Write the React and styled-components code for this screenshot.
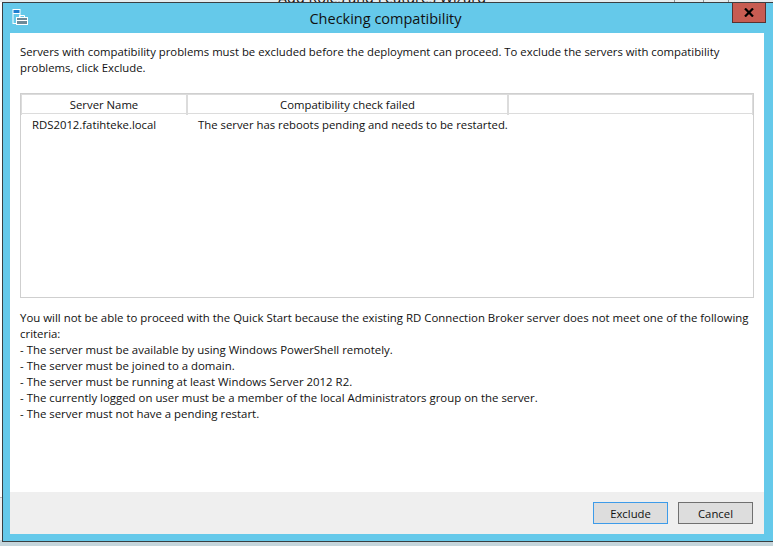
import React from 'react';
import styled, { createGlobalStyle } from 'styled-components';

const GlobalStyle = createGlobalStyle`
  * {
    box-sizing: border-box;
  }
  html, body {
    margin: 0;
    padding: 0;
    background: #c6d6dc;
    font-family: "Open Sans", "Noto Sans", sans-serif;
    font-size: 11.33px;
    color: #111;
  }
`;

const Page = styled.div`
  width: 773px;
  height: 546px;
  overflow: hidden;
  display: flex;
  flex-direction: column;
  background: linear-gradient(#fff 497px, #b9b9b9 497px, #b9b9b9 498px, #efefef 498px, #efefef 540px, #c6d6dc 540px);
`;

const BehindBar = styled.div`
  height: 2px;
  flex: none;
  overflow: hidden;
  display: flex;
  justify-content: center;
  align-items: flex-end;
  background-color: #e6ecee;
  background-image: linear-gradient(#8a9499, #8a9499), linear-gradient(#8a9499, #8a9499), linear-gradient(#8a9499, #8a9499);
  background-size: 1px 2px;
  background-repeat: no-repeat;
  background-position: 674px 0, 703px 0, 728px 0;
`;

const BehindTitle = styled.span`
  font-size: 14.4px;
  line-height: 10px;
  margin-bottom: -1px;
  margin-left: -9px;
  white-space: nowrap;
`;

const Window = styled.div`
  margin-left: 2px;
  height: 540px;
  flex: none;
  background: #65c9ea;
  border-top: 1px solid #3a3f42;
  border-left: 1px solid #3a3f42;
  border-bottom: 1px solid #3a3f42;
  display: flex;
  flex-direction: column;
`;

const TitleBar = styled.div`
  height: 30px;
  flex: none;
  display: flex;
  align-items: center;
  justify-content: center;
  position: relative;
`;

const TitleIcon = styled.svg`
  position: absolute;
  left: 9px;
  top: 6px;
`;

const Title = styled.h1`
  margin: 0 0 0 -5px;
  font-size: 14.5px;
  font-weight: 400;
  color: #111;
`;

const CloseButton = styled.button`
  position: absolute;
  right: 7px;
  top: 0;
  width: 34px;
  height: 20px;
  padding: 0;
  border: 1px solid #5a3230;
  border-top: 0;
  background: #c75c52;
  display: flex;
  align-items: center;
  justify-content: center;
`;

const Body = styled.div`
  margin: 0 9px 7px 7px;
  flex: 1;
  background: #fff;
  display: flex;
  flex-direction: column;
`;

const Content = styled.div`
  flex: 1;
  padding: 11px 10px 0;
  display: flex;
  flex-direction: column;
`;

const Intro = styled.p`
  margin: 0;
  line-height: 16px;
  height: 49px;
`;

const Table = styled.div`
  height: 205px;
  flex: none;
  border: 1px solid #cfcfcf;
  display: flex;
  flex-direction: column;
`;

const Row = styled.div`
  display: grid;
  grid-template-columns: 167px 321px 1fr;
`;

const HeaderRow = styled(Row)`
  height: 20px;
  border-bottom: 1px solid #dcdcdc;
`;

const HeaderCell = styled.div`
  text-align: center;
  line-height: 20px;
  border-right: 2px solid #dcdcdc;
  border-left: ${({ $first }) => ($first ? '1px solid #dcdcdc' : '0')};
  border-top: 1px solid #dcdcdc;
  &:last-child {
    border-right: 1px solid #dcdcdc;
  }
`;

const Cell = styled.div`
  padding-left: ${({ $first }) => ($first ? '11px' : '10px')};
  line-height: 22px;
  white-space: nowrap;
`;

const Notes = styled.div`
  margin-top: 12px;
  font-size: 11.42px;
  line-height: 16px;
`;

const Footer = styled.div`
  height: 42px;
  flex: none;
  background: #efefef;
  display: flex;
  justify-content: flex-end;
  align-items: flex-start;
  gap: 10px;
  padding: 10px 11px 0 0;
`;

const Button = styled.button`
  width: 75px;
  height: 22px;
  padding: 0;
  font: inherit;
  color: #111;
  background: #dddddd;
  border: 1px solid ${({ $focused }) => ($focused ? '#3d9be9' : '#707070')};
`;

const notes = [
  'You will not be able to proceed with the Quick Start because the existing RD Connection Broker server does not meet one of the following criteria:',
  '- The server must be available by using Windows PowerShell remotely.',
  '- The server must be joined to a domain.',
  '- The server must be running at least Windows Server 2012 R2.',
  '- The currently logged on user must be a member of the local Administrators group on the server.',
  '- The server must not have a pending restart.',
];

export default function App() {
  return (
    <Page>
      <GlobalStyle />
      <BehindBar>
        <BehindTitle>Add Roles and Features Wizard</BehindTitle>
      </BehindBar>
      <Window>
        <TitleBar>
          <TitleIcon width="17" height="16" viewBox="0 0 17 16">
            <rect x="0.5" y="0" width="8" height="15" fill="#fff" />
            <rect x="1.5" y="1" width="6" height="3" fill="#1f7fd0" />
            <rect x="1.5" y="5" width="6" height="9" fill="#65c9ea" />
            <rect x="4" y="8" width="12" height="8" fill="#fff" />
            <rect x="5" y="9" width="10" height="2" fill="#6d8a99" />
            <rect x="5" y="12" width="10" height="3" fill="#6d8a99" />
            <path d="M7.5 8V6.5h5V8" fill="none" stroke="#fff" strokeWidth="1" />
          </TitleIcon>
          <Title>Checking compatibility</Title>
          <CloseButton aria-label="Close">
            <svg width="10" height="9" viewBox="0 0 10 9">
              <path d="M1 0.5 L9 8.5 M9 0.5 L1 8.5" stroke="#000" strokeWidth="2.2" />
            </svg>
          </CloseButton>
        </TitleBar>
        <Body>
          <Content>
            <Intro>
              Servers with compatibility problems must be excluded before the deployment can proceed. To exclude the servers with compatibility problems, click Exclude.
            </Intro>
            <Table>
              <HeaderRow>
                <HeaderCell $first>Server Name</HeaderCell>
                <HeaderCell>Compatibility check failed</HeaderCell>
                <HeaderCell />
              </HeaderRow>
              <Row>
                <Cell $first>RDS2012.fatihteke.local</Cell>
                <Cell>The server has reboots pending and needs to be restarted.</Cell>
              </Row>
            </Table>
            <Notes>
              {notes.map((line) => (
                <div key={line}>{line}</div>
              ))}
            </Notes>
          </Content>
          <Footer>
            <Button $focused>Exclude</Button>
            <Button>Cancel</Button>
          </Footer>
        </Body>
      </Window>
    </Page>
  );
}
